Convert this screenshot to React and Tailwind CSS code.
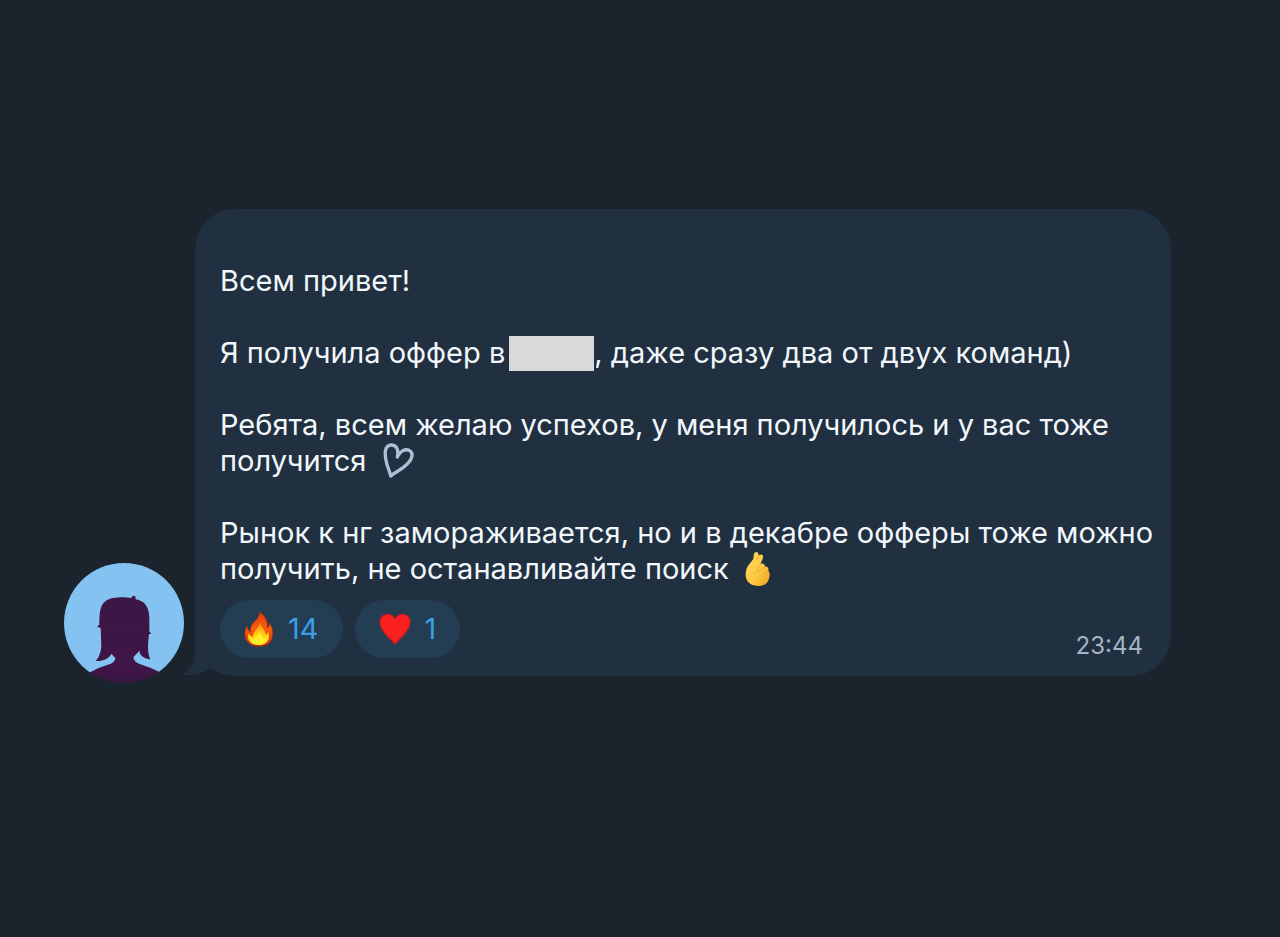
const reactions = [
  { name: "Огонь", count: 14, Icon: FireIcon },
  { name: "Сердце", count: 1, Icon: HeartIcon },
];

function Avatar() {
  return (
    <svg viewBox="0 0 360 360" className="h-30 w-30 shrink-0" role="img" aria-label="Аватар">
      <defs>
        <clipPath id="avatar-circle">
          <circle cx="180" cy="180" r="180" />
        </clipPath>
        <linearGradient id="avatar-body" x1="0" y1="0" x2="0" y2="1">
          <stop offset="0" stopColor="#3a1745" />
          <stop offset="0.85" stopColor="#401546" />
          <stop offset="1" stopColor="#301a3c" />
        </linearGradient>
      </defs>
      <g clipPath="url(#avatar-circle)">
        <path fill="#84c3f1" d="M0 0 H360 V328 H0 Z" />
        <path
          transform="translate(-42 -39)"
          fill="url(#avatar-body)"
          d="M60 410 L120 367 Q150 351 178 343 Q195 337 196 324 L184 311 C179 324 160 335 137 333 Q151 318 154 290 L152 234 L141 230 L148 224 C148 190 150 165 167 153 C183 141 220 140 243 144 L249 137 L256 139 L257 148 C284 152 297 171 298 203 L298 244 L304 252 L297 252 C295 276 290 305 301 328 C283 325 268 318 269 302 Q259 311 250 322 Q251 335 267 341 Q300 351 330 367 L390 410 Z"
        />
      </g>
    </svg>
  );
}

function BubbleTail() {
  return (
    <svg viewBox="0 0 40 40" className="absolute bottom-0 -left-3.5 h-10 w-10" fill="#213040" aria-hidden="true">
      <path d="M14 0 V20 Q13 32 1 39 Q17 41 29 32 L40 20 V0 Z" />
    </svg>
  );
}

function FireIcon() {
  return (
    <svg viewBox="0 0 90 108" className="h-9 w-[30px]" aria-hidden="true">
      <defs>
        <linearGradient id="flame-outer" x1="0" y1="0" x2="0" y2="1">
          <stop offset="0" stopColor="#e8380d" />
          <stop offset="0.5" stopColor="#f4600c" />
          <stop offset="1" stopColor="#dd2a08" />
        </linearGradient>
        <linearGradient id="flame-inner" x1="0" y1="0" x2="0" y2="1">
          <stop offset="0" stopColor="#ff8a12" />
          <stop offset="0.5" stopColor="#ffc914" />
          <stop offset="1" stopColor="#fff32c" />
        </linearGradient>
      </defs>
      <path
        fill="url(#flame-outer)"
        stroke="#b42412"
        strokeWidth="2"
        d="M46 2 C67 16 72 35 69 51 C75 47 77 41 76 35 C88 51 89 72 82 87 C75 101 61 106 44 106 C25 106 12 99 6 85 C0 70 3 56 9 46 C11 55 14 60 19 63 C18 48 24 38 34 29 C43 21 48 12 46 2 Z"
      />
      <path
        fill="url(#flame-inner)"
        d="M48 33 C51 50 64 57 65 71 C69 70 71 66 72 62 C80 79 73 102 44 102 C15 102 9 82 14 67 C17 74 22 77 27 77 C26 59 47 53 48 33 Z"
      />
      <path
        fill="#ffed2b"
        d="M46 62 C48 71 57 77 57 86 C61 85 64 82 66 78 C70 92 61 101 44 101 C25 101 18 91 20 80 C23 84 27 87 32 86 C32 77 44 74 46 62 Z"
      />
    </svg>
  );
}

function HeartIcon() {
  return (
    <svg viewBox="0 0 100 100" className="h-8 w-8" aria-hidden="true">
      <path
        fill="#fb211f"
        stroke="#c51c20"
        strokeWidth="4"
        d="M50 97 C36 79 3 57 3 28 C3 3 36 -5 50 18 C64 -5 97 3 97 28 C97 57 64 79 50 97 Z"
      />
    </svg>
  );
}

function SketchHeart() {
  return (
    <svg viewBox="39 32 93 108" className="ml-2 inline-block h-9 w-[31px] align-bottom" role="img" aria-label="Сердце">
      <path
        fill="none"
        stroke="#aebfd2"
        strokeWidth="10"
        strokeLinecap="round"
        strokeLinejoin="round"
        d="M82 74 C87 50 78 37 63 38 C43 40 44 63 48 84 C51 103 59 115 62 131 C76 118 94 114 113 94 C127 80 131 63 119 55 C105 47 88 58 82 74"
      />
    </svg>
  );
}

function CrossedFingers() {
  return (
    <svg viewBox="50 24 76 108" className="ml-2 inline-block h-9 w-[26px] align-bottom" role="img" aria-label="Пальцы сердечком">
      <defs>
        <linearGradient id="hand-skin" x1="0" y1="0" x2="1" y2="1">
          <stop offset="0" stopColor="#ffd95c" />
          <stop offset="0.55" stopColor="#fdca43" />
          <stop offset="1" stopColor="#eca023" />
        </linearGradient>
      </defs>
      <path
        fill="url(#hand-skin)"
        d="M78 29 C85 23 91 30 90 38 C96 31 105 34 103 43 C102 51 97 57 96 63 C103 59 109 64 109 71 C117 69 121 76 119 84 C126 90 123 107 117 116 C108 129 91 132 75 127 C60 123 52 112 51 97 C50 82 56 70 64 61 L74 48 C76 41 73 34 78 29 Z"
      />
      <path
        fill="none"
        stroke="#dd9a2b"
        strokeWidth="2"
        strokeLinecap="round"
        d="M90 38 C89 44 87 47 83 50 M96 63 C91 69 86 75 87 82 C91 86 99 80 109 71 M119 84 C113 91 107 92 103 89 M87 84 C84 89 79 91 75 89"
      />
    </svg>
  );
}

function Reaction({ name, count, Icon }) {
  return (
    <button
      type="button"
      aria-label={`${name} ${count}`}
      className="flex h-[58px] items-center gap-3.5 rounded-full bg-[#233d52] px-6 text-[29px] text-[#3b9fe6]"
    >
      <Icon />
      <span>{count}</span>
    </button>
  );
}

export default function App() {
  return (
    <main className="min-h-screen bg-[#1b232d] pt-[209px] pr-[109px] pb-16 pl-16 font-['Inter',sans-serif]">
      <div className="flex items-end gap-[11px]">
        <div className="-mb-[7px] shrink-0">
          <Avatar />
        </div>
        <article className="relative min-w-0 flex-1 rounded-[40px] bg-[#213040] pt-[54px] pr-4 pb-[18px] pl-[25px]">
          <BubbleTail />
          <div className="relative space-y-9 text-[29px] leading-9 text-[#f2f7fc]">
            <p>Всем привет!</p>
            <p>
              Я получила оффер в
              <span className="ml-1 inline-block h-[35px] w-[85px] bg-[#d9d9d9] align-bottom" />
              , даже сразу два от двух команд)
            </p>
            <p>
              Ребята, всем желаю успехов, у меня получилось и у вас тоже
              <br />
              получится <SketchHeart />
            </p>
            <p>
              Рынок к нг замораживается, но и в декабре офферы тоже можно
              <br />
              получить, не останавливайте поиск <CrossedFingers />
            </p>
          </div>
          <footer className="relative mt-[13px] flex items-end justify-between">
            <div className="flex gap-3">
              {reactions.map((reaction) => (
                <Reaction key={reaction.name} {...reaction} />
              ))}
            </div>
            <time className="pr-3 text-2xl leading-6 text-[#a5b4c5]">23:44</time>
          </footer>
        </article>
      </div>
    </main>
  );
}
